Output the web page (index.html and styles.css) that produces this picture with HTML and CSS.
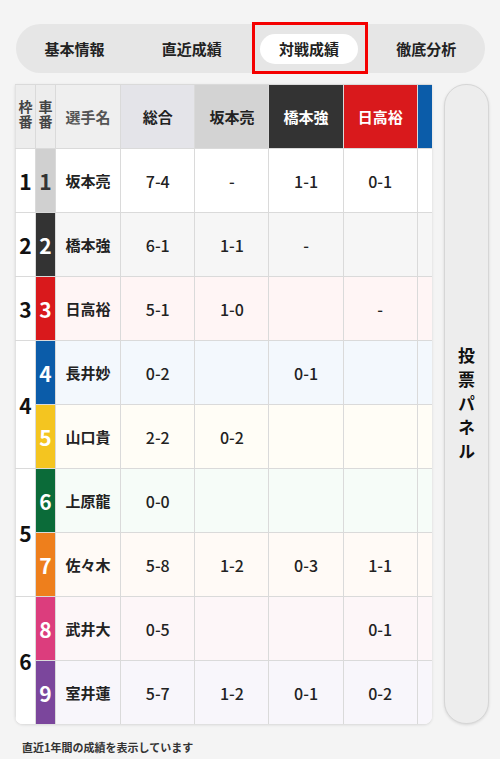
FILE: index.html
```html
<!DOCTYPE html>
<html lang="ja">
<head>
<meta charset="utf-8">
<title>対戦成績</title>
<link rel="stylesheet" href="styles.css">
</head>
<body>
<div class="page">
  <nav class="tabs">
    <div class="tab"><span class="tab-label">基本情報</span></div>
    <div class="tab"><span class="tab-label">直近成績</span></div>
    <div class="tab tab-active"><span class="tab-label">対戦成績</span></div>
    <div class="tab"><span class="tab-label">徹底分析</span></div>
  </nav>

  <div class="main">
    <div class="table-wrap">
      <table class="grid">
        <colgroup>
          <col class="c-waku"><col class="c-sha"><col class="c-name">
          <col class="c-val"><col class="c-val"><col class="c-val"><col class="c-val"><col class="c-val">
        </colgroup>
        <thead>
          <tr>
            <th class="h-small"><span class="stack">枠番</span></th>
            <th class="h-small"><span class="stack">車番</span></th>
            <th class="h-name">選手名</th>
            <th class="h-total">総合</th>
            <th class="h-c1">坂本亮</th>
            <th class="h-c2">橋本強</th>
            <th class="h-c3">日高裕</th>
            <th class="h-c4"></th>
          </tr>
        </thead>
        <tbody>
          <tr class="r1">
            <td class="waku">1</td><td class="sha s1">1</td><td class="name">坂本亮</td>
            <td>7-4</td><td>-</td><td>1-1</td><td>0-1</td><td></td>
          </tr>
          <tr class="r2">
            <td class="waku">2</td><td class="sha s2">2</td><td class="name">橋本強</td>
            <td>6-1</td><td>1-1</td><td>-</td><td></td><td></td>
          </tr>
          <tr class="r3">
            <td class="waku">3</td><td class="sha s3">3</td><td class="name">日高裕</td>
            <td>5-1</td><td>1-0</td><td></td><td>-</td><td></td>
          </tr>
          <tr class="r4">
            <td class="waku" rowspan="2">4</td><td class="sha s4">4</td><td class="name">長井妙</td>
            <td>0-2</td><td></td><td>0-1</td><td></td><td></td>
          </tr>
          <tr class="r5">
            <td class="sha s5">5</td><td class="name">山口貴</td>
            <td>2-2</td><td>0-2</td><td></td><td></td><td></td>
          </tr>
          <tr class="r6">
            <td class="waku" rowspan="2">5</td><td class="sha s6">6</td><td class="name">上原龍</td>
            <td>0-0</td><td></td><td></td><td></td><td></td>
          </tr>
          <tr class="r7">
            <td class="sha s7">7</td><td class="name">佐々木</td>
            <td>5-8</td><td>1-2</td><td>0-3</td><td>1-1</td><td></td>
          </tr>
          <tr class="r8">
            <td class="waku" rowspan="2">6</td><td class="sha s8">8</td><td class="name">武井大</td>
            <td>0-5</td><td></td><td></td><td>0-1</td><td></td>
          </tr>
          <tr class="r9">
            <td class="sha s9">9</td><td class="name">室井蓮</td>
            <td>5-7</td><td>1-2</td><td>0-1</td><td>0-2</td><td></td>
          </tr>
        </tbody>
      </table>
    </div>
    <aside class="vote-panel"><span class="vote-text">投票パネル</span></aside>
  </div>

  <p class="note">直近1年間の成績を表示しています</p>
</div>
</body>
</html>
```

FILE: styles.css
```css
* { box-sizing: border-box; }

html, body {
  margin: 0;
  padding: 0;
  background: #f4f4f4;
  font-family: "Noto Sans CJK JP", "Noto Sans", sans-serif;
  color: #222;
}

.page {
  padding: 24px 0 0 0;
}

.tabs {
  margin: 0 15px 0 16px;
  height: 49px;
  border-radius: 25px;
  background: #e6e6e6;
  display: grid;
  grid-template-columns: repeat(4, 1fr);
  align-items: center;
}

.tab {
  position: relative;
  height: 100%;
  display: flex;
  align-items: center;
  justify-content: center;
}

.tab-label {
  font-size: 15px;
  font-weight: 700;
  color: #222;
  line-height: 30px;
  height: 30px;
  padding: 0 18px;
  border-radius: 15px;
}

.tab-active .tab-label {
  background: #fff;
  width: 98px;
  text-align: center;
  padding: 0;
}

.tab-active::after {
  content: "";
  position: absolute;
  left: 1px;
  right: 0;
  top: -2px;
  bottom: -1px;
  border: 3px solid #f40000;
}

.main {
  display: flex;
  gap: 12px;
  margin: 11px 0 0 15px;
}

.table-wrap {
  width: 417px;
  height: 640px;
  overflow: hidden;
  border-radius: 0 0 8px 8px;
  background: #fff;
  box-shadow: 0 1px 3px rgba(0,0,0,0.12);
}

.grid {
  border-collapse: collapse;
  table-layout: fixed;
  width: 477px;
}

.c-waku { width: 20px; }
.c-sha { width: 20px; }
.c-name { width: 65px; }
.c-val { width: 74px; }

.grid th, .grid td {
  border: 1px solid #dadada;
  height: 64px;
  padding: 0;
  text-align: center;
  vertical-align: middle;
}

.grid tr > :first-child { border-left: 1px solid #e2e2e2; }

.grid th {
  font-size: 15px;
  font-weight: 700;
}

.h-small {
  background: #ededed;
  color: #444;
}
.stack {
  display: inline-block;
  writing-mode: vertical-rl;
  font-size: 14px;
  line-height: 16px;
  letter-spacing: 1px;
}
.h-name { background: #efefef; color: #555; }
.h-total { background: #e4e4e9; color: #222; }
.h-c1 { background: #d3d3d3; color: #222; }
.h-c2 { background: #333; color: #fff; }
.h-c3 { background: #d9191c; color: #fff; }
.h-c4 { background: #0b5ca9; color: #fff; }

.grid td {
  font-size: 16px;
  font-weight: 500;
  color: #222;
}

.grid td.name {
  font-size: 15px;
  font-weight: 700;
}

.grid td.waku {
  background: #fff;
  font-size: 21px;
  font-weight: 700;
  color: #111;
}

.grid td.sha {
  font-size: 21px;
  font-weight: 700;
  color: #fff;
}

.s1 { background: #d0d0d0; color: #333 !important; }
.s2 { background: #333333; }
.s3 { background: #d9191c; }
.s4 { background: #0b5ca9; }
.s5 { background: #f4c520; }
.s6 { background: #0b6b39; }
.s7 { background: #ee7f1c; }
.s8 { background: #dc3d7d; }
.s9 { background: #7b469c; }

.r1 { background: #ffffff; }
.r2 { background: #f6f6f6; }
.r3 { background: #fff5f5; }
.r4 { background: #f3f8fd; }
.r5 { background: #fffdf6; }
.r6 { background: #f6fcf8; }
.r7 { background: #fffaf6; }
.r8 { background: #fdf6f8; }
.r9 { background: #f8f6fb; }

.vote-panel {
  width: 45px;
  height: 640px;
  border-radius: 22px;
  background: #ededed;
  border: 1px solid #d6d6d6;
  box-shadow: 0 1px 3px rgba(0,0,0,0.12);
  display: flex;
  align-items: center;
  justify-content: center;
}

.vote-text {
  writing-mode: vertical-rl;
  font-size: 17px;
  font-weight: 700;
  letter-spacing: 7px;
  color: #111;
  margin-top: 6px;
}

.note {
  margin: 15px 0 0 22px;
  font-size: 11px;
  font-weight: 700;
  color: #333;
}
```
